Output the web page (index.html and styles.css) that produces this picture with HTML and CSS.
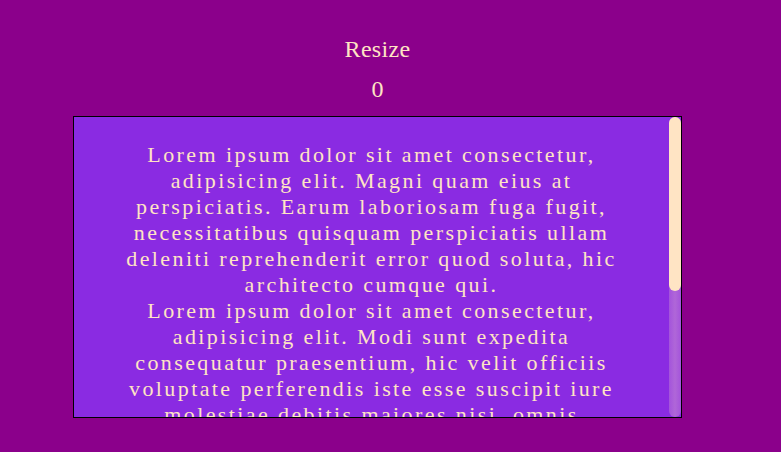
FILE: index.html
```html
<!DOCTYPE html>
<html>
<head>
<meta charset="utf-8">
<link rel="stylesheet" href="styles.css">
</head>
<body>
<main class="page">
  <h2 class="title">Resize</h2>
  <div class="count">0</div>
  <div class="box">
    <div class="content">
      <p>Lorem ipsum dolor sit amet consectetur, adipisicing elit. Magni quam eius at perspiciatis. Earum laboriosam fuga fugit, necessitatibus quisquam perspiciatis ullam deleniti reprehenderit error quod soluta, hic architecto cumque qui.</p>
      <p>Lorem ipsum dolor sit amet consectetur, adipisicing elit. Modi sunt expedita consequatur praesentium, hic velit officiis voluptate perferendis iste esse suscipit iure molestiae debitis maiores nisi, omnis voluptatibus. Quibusdam ad, totam doloremque voluptas nobis ipsam sed ut exercitationem dicta accusamus deserunt eaque, aliquid quas velit sapiente! Dolorum quia nam accusantium laudantium.</p>
    </div>
    <div class="scrollbar">
      <div class="thumb"></div>
    </div>
  </div>
</main>
</body>
</html>
```
FILE: styles.css
```css
html, body {
  margin: 0;
  padding: 0;
  background: #8b008b;
}
body {
  font-family: "Liberation Serif", "Times New Roman", serif;
  color: #ffe4c4;
}
.page {
  display: flex;
  flex-direction: column;
  width: 609px;
  margin-left: 73px;
  padding-top: 35px;
}
.title {
  margin: 0;
  font-size: 24px;
  font-weight: normal;
  line-height: 28px;
  text-align: center;
  letter-spacing: 0.3px;
}
.count {
  margin-top: 12px;
  font-size: 24px;
  line-height: 28px;
  text-align: center;
}
.box {
  margin-top: 13px;
  height: 300px;
  border: 1px solid #000;
  background: #8a2be2;
  display: flex;
}
.content {
  flex: 1;
  overflow: hidden;
  padding: 25px 32px 0;
  text-align: center;
  font-size: 22px;
  line-height: normal;
  letter-spacing: 2.4px;
}
.content p {
  margin: 0;
}
.scrollbar {
  width: 12px;
  flex: none;
  border-radius: 6px;
  background: linear-gradient(to right, rgba(255, 228, 196, 0.22), rgba(255, 228, 196, 0.32) 50%, rgba(255, 228, 196, 0.22));
}
.thumb {
  height: 174px;
  border-radius: 6px;
  background: #ffe4c4;
}
```
